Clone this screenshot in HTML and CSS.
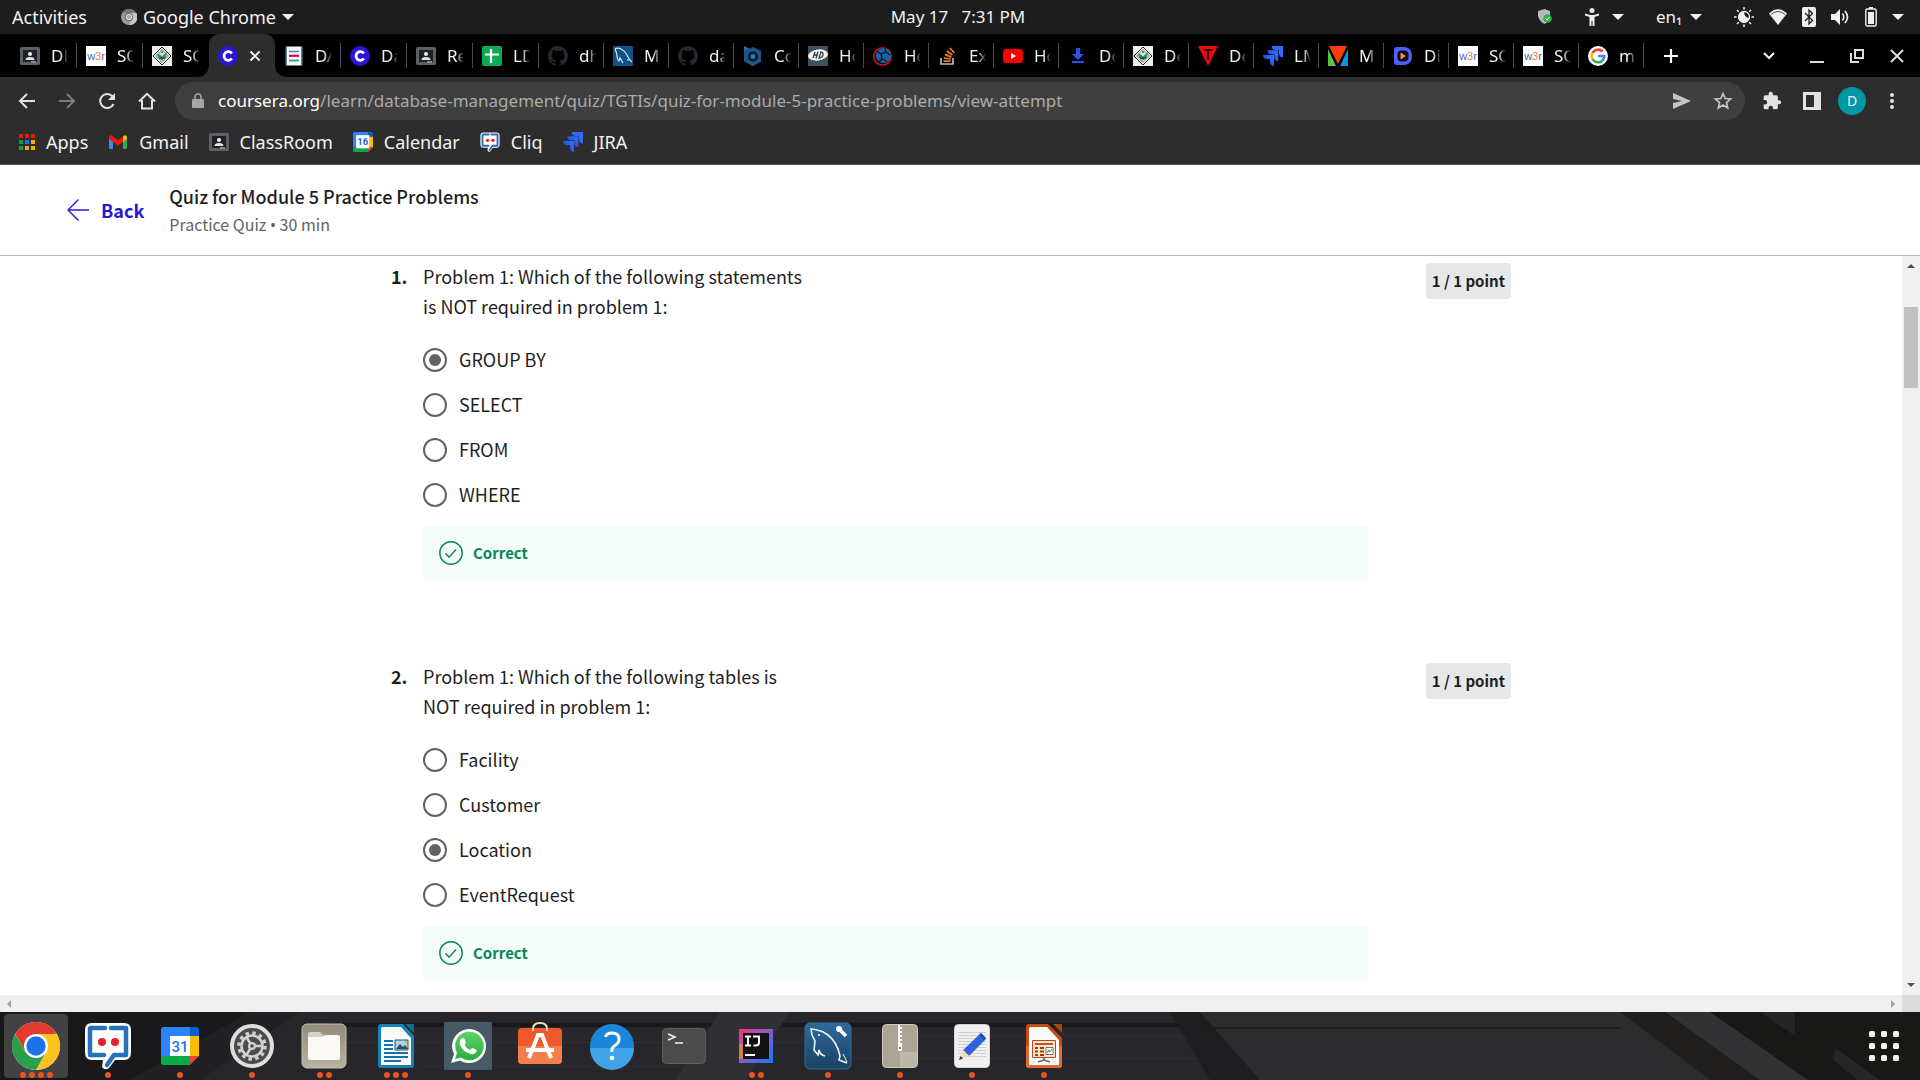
FILE: index.html
```html
<!DOCTYPE html>
<html lang="en">
<head>
<meta charset="utf-8">
<title>Quiz for Module 5 Practice Problems</title>
<link rel="stylesheet" href="styles.css">
</head>
<body>

<svg class="sprite" aria-hidden="true">
  <defs>
    <linearGradient id="g-jira" x1="1" y1="0" x2="0" y2="1"><stop offset=".2" stop-color="#2f6bff"/><stop offset="1" stop-color="#1638c8"/></linearGradient>
    <linearGradient id="g-folder" x1="0" y1="0" x2="0" y2="1"><stop offset="0" stop-color="#938b7a"/><stop offset="1" stop-color="#b9b3a2"/></linearGradient>
    <linearGradient id="g-mysql" x1="0" y1="0" x2="0" y2="1"><stop offset="0" stop-color="#2d6a9c"/><stop offset="1" stop-color="#1b4263"/></linearGradient>
    <linearGradient id="g-wa" x1="0" y1="0" x2="0" y2="1"><stop offset="0" stop-color="#5fd168"/><stop offset="1" stop-color="#27b13e"/></linearGradient>
    <linearGradient id="g-ij" x1="0" y1="0" x2="1" y2="1"><stop offset="0" stop-color="#ff3175"/><stop offset=".5" stop-color="#8a5bd0"/><stop offset="1" stop-color="#087cfa"/></linearGradient>
  </defs>
  <symbol id="classroom" viewBox="0 0 20 20"><rect y="1" width="20" height="18" rx="1.5" fill="#5d6066"/><rect x="3" y="4" width="14" height="12" fill="#1f2124"/><circle cx="10" cy="8" r="2" fill="#f1f1f1"/><path d="M5.5 14q0-3 4.500-3t4.500 3z" fill="#e5e5e5"/><rect x="11" y="15" width="5" height="2" fill="#8a8d92"/></symbol>
  <symbol id="diamond" viewBox="0 0 20 20"><rect width="20" height="20" fill="#eceeec"/><path d="M10 1l9 9-9 9-9-9z" fill="#fff" stroke="#222" stroke-width="1"/><path d="M10 3.500l6.500 6.500-6.500 6.500-6.500-6.500z" fill="#d8dcd8" stroke="#444" stroke-width=".7"/><path d="M5 8l3 .5 2 2 5-5-1 6-4 3-4-3z" fill="#2f8f62"/><path d="M7 12h6M9 6h2" stroke="#222"/></symbol>
  <symbol id="coursera" viewBox="0 0 20 20"><circle cx="10" cy="10" r="10" fill="#2a17d6"/><path d="M13.800 12.500A4.300 4.300 0 1 1 13.800 7.500" fill="none" stroke="#fff" stroke-width="2.800"/></symbol>
  <symbol id="docs" viewBox="0 0 20 20"><rect x="2" y="0" width="16" height="20" rx="1.500" fill="#f8f8f8" stroke="#3c5a66" stroke-width="1.500"/><path d="M5 5.500h10" stroke="#4a7fd6" stroke-width="1.500"/><path d="M5 9.800h10" stroke="#e8004d" stroke-width="2.200"/><path d="M5 14.500h10" stroke="#1fa37a" stroke-width="1.800"/></symbol>
  <symbol id="sheets" viewBox="0 0 20 20"><rect width="20" height="20" rx="2" fill="#0cab54"/><path d="M9 3v14M3 8.500h14" stroke="#fff" stroke-width="2.200"/></symbol>
  <symbol id="github" viewBox="0 0 16 16"><path fill="#24292f" d="M8 0C3.580 0 0 3.580 0 8c0 3.540 2.290 6.530 5.470 7.590.4.070.55-.17.55-.38 0-.19-.01-.82-.01-1.490-2.010.37-2.530-.49-2.690-.94-.09-.23-.48-.94-.82-1.130-.28-.15-.68-.52-.01-.53.63-.01 1.080.58 1.230.82.72 1.210 1.870.87 2.330.66.07-.52.28-.87.51-1.070-1.780-.2-3.640-.89-3.640-3.950 0-.87.31-1.590.82-2.150-.08-.2-.36-1.020.08-2.120 0 0 .67-.21 2.200.82.64-.18 1.320-.27 2-.27s1.360.09 2 .27c1.530-1.040 2.200-.82 2.200-.82.44 1.100.16 1.920.08 2.120.51.56.82 1.270.82 2.150 0 3.070-1.870 3.750-3.650 3.950.29.25.54.73.54 1.480 0 1.070-.01 1.930-.01 2.200 0 .21.15.46.55.38A8.010 8.010 0 0 0 16 8c0-4.420-3.580-8-8-8z"/></symbol>
  <symbol id="mysql" viewBox="0 0 20 20"><rect width="20" height="20" fill="#0e5386"/><path d="M2 3c3-2 9 0 12 6l2 4 3 3M2 3c1 3 2 4 2 7s1 4 2 5l1-3 3 5M14 14l2 0" fill="none" stroke="#d4e4ee" stroke-width="1.200"/></symbol>
  <symbol id="hexb" viewBox="0 0 20 20"><path d="M1 0l5 2.500v5l4-2 8 4.500v5.500l-8 4.500-9-5z" fill="#2f6c9f"/><path d="M10 1l8 4v10.500L10 20l-9-5V4.500l5-2z" fill="#1f5688"/><circle cx="10" cy="10.500" r="4" fill="none" stroke="#081018" stroke-width="2.200"/><circle cx="10" cy="10.500" r="1.600" fill="#3f86c0"/></symbol>
  <symbol id="hd" viewBox="0 0 20 20"><rect width="20" height="20" fill="#3d505c"/><ellipse cx="10" cy="9" rx="10" ry="5.500" fill="#f2f2f2" transform="rotate(-8 10 9)"/><path d="M7 6l-2 6M10 5.500l-2 7M6 9h4M13 6l-2 6q4 0 4-4 0-2-3-2" stroke="#333f48" stroke-width="1.300" fill="none"/></symbol>
  <symbol id="globe" viewBox="0 0 20 20"><circle cx="9.500" cy="10.500" r="8.700" fill="#101418" stroke="#d0101c" stroke-width="1.500"/><circle cx="10.500" cy="9.500" r="7.500" fill="#1763a8"/><path d="M4 5l4 3 1 5-3 3M8 8l5-2 4 3M13 6l-1-4M9 13l5 2" stroke="#08121c" stroke-width="1.200" fill="none"/></symbol>
  <symbol id="stack" viewBox="0 0 20 20"><path d="M3 12v6h12v-6" fill="none" stroke="#bcbbbb" stroke-width="1.700"/><path d="M5.500 15.200h7M5.800 12l7 1M7 8.400l6.400 2.700M9 5l5.400 4M12 2l4.300 5" stroke="#f48024" stroke-width="1.700"/></symbol>
  <symbol id="youtube" viewBox="0 0 20 20"><rect y="3" width="20" height="14" rx="3.500" fill="#f00"/><path d="M8 7v6l5-3z" fill="#fff"/></symbol>
  <symbol id="download" viewBox="0 0 20 20"><path d="M8 2h4v6h4l-6 6-6-6h4zM4 15h12v2H4z" fill="#2b52e6"/></symbol>
  <symbol id="tri" viewBox="0 0 20 20"><path d="M0 0h20L10 20z" fill="#f00808"/><path d="M5.500 4h9M10 4v10" stroke="#300" stroke-width="2.200"/></symbol>
  <symbol id="jira" viewBox="0 0 20 20"><path d="M8.500 0H20v11.500C17.300 11.500 16 9.500 16 7.500V4h-3.500C10.500 4 8.500 2.500 8.500 0z" fill="#3069ff"/><path d="M4.300 4.300h11v11c-2.700 0-4-2-4-4V8.300H8.300c-2.200 0-4-1.500-4-4z" fill="url(#g-jira)"/><path d="M0 9h11v11c-2.700 0-4-2-4-4v-3H4c-2.200 0-4-1.500-4-4z" fill="url(#g-jira)"/></symbol>
  <symbol id="vee" viewBox="0 0 20 20"><path d="M1 0h18l-9 18z" fill="#ff3d0a"/><path d="M0 3v17h8z" fill="#57c444"/><path d="M20 3v17h-8z" fill="#0c93dc"/></symbol>
  <symbol id="play" viewBox="0 0 20 20"><path d="M4 1h8q7 1 7 9t-7 9H4q-3 0-3-3V4q0-3 3-3z" fill="#4b62f5"/><rect x="4.500" y="4.500" width="11" height="11" rx="4" fill="#0a0d24"/><path d="M7.500 6.500v7l5.500-3.500z" fill="#ff8a1c"/></symbol>
  <symbol id="google" viewBox="0 0 20 20"><circle cx="10" cy="10" r="10" fill="#fff"/><g fill="none" stroke-width="2.600"><path d="M14.600 5.500A6.300 6.300 0 0 0 4.500 7" stroke="#ea4335"/><path d="M4.500 7a6.300 6.300 0 0 0 0 6" stroke="#fbbc05"/><path d="M4.500 13a6.300 6.300 0 0 0 9.700 1.700" stroke="#34a853"/><path d="M14.200 14.700A6.300 6.300 0 0 0 16.200 10H10" stroke="#4285f4"/></g></symbol>
  <symbol id="gmail" viewBox="0 0 20 16"><path d="M1 3v11q0 1 1 1h3V7z" fill="#4285f4"/><path d="M19 3v11q0 1-1 1h-3V7z" fill="#34a853"/><path d="M15 2.500V8l4-3V3q-1-3-4-.5z" fill="#fbbc04"/><path d="M1 3v2l4 3 5 3.500L15 8V2.500l-5 3.700-5-3.700Q2 0 1 3z" fill="#f2180c"/></symbol>
  <symbol id="cal" viewBox="0 0 38 38"><path d="M0 3q0-3 3-3h26v9H9v20H0z" fill="#2a84fb"/><path d="M29 0h6q3 0 3 3v6h-9z" fill="#0a5fd0"/><path d="M29 9h9v20h-9z" fill="#fbbc04"/><path d="M0 29h29v9H3q-3 0-3-3z" fill="#0ba84a"/><path d="M29 29h9l-9 9z" fill="#ea4335"/><path d="M9 9h20v20H9z" fill="#fff"/></symbol>
  <symbol id="cliq" viewBox="0 0 48 48"><path d="M8 1h32q7 0 7 7v22q0 8-7 8h-9l-6 8q-4 3-7-1l1-7H8q-7 0-7-8V8q0-7 7-7z" fill="#fff"/><path d="M21 6H7q-1 0-1 1v26h14M27 6h15v27H30l-7 10" fill="none" stroke="#2870b8" stroke-width="4.500" stroke-linejoin="round" stroke-linecap="round"/><circle cx="18" cy="20" r="4" fill="#e8202a"/><circle cx="31" cy="20" r="4" fill="#e8202a"/></symbol>
  <symbol id="caret" viewBox="0 0 12 8"><path d="M0 1h12L6 7z" fill="#f0f0f0"/></symbol>
  <symbol id="check" viewBox="0 0 24 24"><g fill="none" stroke="#078756" stroke-width="1.400"><circle cx="12" cy="12" r="11.200"/><path d="M6.500 12.300l3.500 3.900 7-7.700"/></g></symbol>
</svg>

<header class="desktop-bar">
  <div class="desktop-left">
    <button>Activities</button>
    <button class="app-menu">
      <svg width="16" height="16" viewBox="0 0 16 16"><circle cx="8" cy="8" r="8" fill="#9a9a9a"/><path d="M8 4h7.500A8 8 0 0 1 8 16l3.500-6z" fill="#c9c9c9"/><path d="M1 4a8 8 0 0 1 14 0H8z" fill="#777"/><circle cx="8" cy="8" r="4" fill="#555"/><circle cx="8" cy="8" r="2.800" fill="#aaa" stroke="#eee"/></svg>
      Google Chrome
      <svg class="caret" width="12" height="8"><use href="#caret"/></svg>
    </button>
  </div>
  <time class="clock">May 17 &nbsp; 7:31 PM</time>
  <div class="desktop-right">
    <svg width="14" height="16" viewBox="0 0 14 16"><path d="M6.500 0L12 2v6q0 4-5.500 7Q1 12 0 7V2z" fill="#b9b9b9"/><circle cx="9.500" cy="9.500" r="4.300" fill="#2fb344"/><path d="M7.500 9.500l1.500 1.500 2.500-3" stroke="#fff" fill="none"/></svg>
    <button class="menu"><svg width="16" height="18" viewBox="0 0 16 18"><circle cx="8" cy="2.500" r="2.500" fill="#f0f0f0"/><path d="M1 5.500l5 1.500h4l5-1.500v2L10.500 9v9h-2v-5h-1v5h-2V9L1 7.500z" fill="#f0f0f0"/></svg><svg class="caret" width="12" height="8"><use href="#caret"/></svg></button>
    <button class="menu lang">en₁<svg class="caret" width="12" height="8"><use href="#caret"/></svg></button>
    <button class="menu tray">
      <svg width="20" height="20" viewBox="0 0 20 20"><circle cx="10" cy="10" r="5.500" fill="none" stroke="#f0f0f0" stroke-width="1.300"/><path d="M10 4.500a5.500 5.500 0 1 0 5.500 6.500Q10 11 10 4.500z" fill="#f0f0f0"/><path d="M10 0v2.500M10 17.500V20M0 10h2.500M17.500 10H20M3 3l1.800 1.800M15.200 15.200L17 17M17 3l-1.800 1.800M4.800 15.200L3 17" stroke="#f0f0f0" stroke-width="1.500"/></svg>
      <svg width="18" height="16" viewBox="0 0 18 16"><path d="M0 4.500Q9-4 18 4.500L9 16z" fill="#f0f0f0"/><path d="M2 5.500Q9-.5 16 5.500" stroke="#1d1d1d" fill="none" stroke-width=".8"/></svg>
      <svg width="14" height="20" viewBox="0 0 14 20"><rect width="14" height="20" rx="2" fill="#f0f0f0"/><path d="M3 6l7.500 7.500L7 17V3l3.500 3.500L3 14" fill="none" stroke="#1d1d1d" stroke-width="1.300"/></svg>
      <svg width="19" height="16" viewBox="0 0 19 16"><path d="M0 5h4l5-5v16l-5-5H0z" fill="#f0f0f0"/><path d="M11.500 4.500q2.500 3.500 0 7M14 2q5 6 0 12" fill="none" stroke="#f0f0f0" stroke-width="1.600"/></svg>
      <svg width="12" height="20" viewBox="0 0 12 20"><path d="M4 0h4v2H4z" fill="#f0f0f0"/><rect x=".8" y="2" width="10.400" height="17" rx="1.500" fill="none" stroke="#f0f0f0" stroke-width="1.400"/><path d="M3 5h6v12H3z" fill="#f0f0f0"/></svg>
      <svg width="12" height="8"><use href="#caret"/></svg>
    </button>
  </div>
</header>

<nav class="tab-strip">
  <div class="tabs">
    <button class="tab wide"><svg><use href="#classroom"/></svg><span>DB</span></button>
    <button class="tab wide"><svg class="w3r" viewBox="0 0 20 20"><text x="10" y="14" text-anchor="middle">w<tspan>3</tspan>r</text></svg><span>SQ</span></button>
    <button class="tab wide plain"><svg><use href="#diamond"/></svg><span>SQ</span></button>
    <button class="tab wide active"><svg><use href="#coursera"/></svg><svg class="close" viewBox="0 0 12 12"><path d="M1.500 1.500l9 9M10.500 1.500l-9 9" stroke="#fff" stroke-width="1.900"/></svg></button>
    <button class="tab wide"><svg><use href="#docs"/></svg><span>DA</span></button>
    <button class="tab wide"><svg><use href="#coursera"/></svg><span>Da</span></button>
    <button class="tab wide"><svg><use href="#classroom"/></svg><span>Re</span></button>
    <button class="tab wide"><svg><use href="#sheets"/></svg><span>LD</span></button>
    <button class="tab"><svg><use href="#github"/></svg><span>dh</span></button>
    <button class="tab"><svg><use href="#mysql"/></svg><span>M</span></button>
    <button class="tab"><svg><use href="#github"/></svg><span>da</span></button>
    <button class="tab"><svg><use href="#hexb"/></svg><span>Co</span></button>
    <button class="tab"><svg><use href="#hd"/></svg><span>Ho</span></button>
    <button class="tab"><svg><use href="#globe"/></svg><span>Ho</span></button>
    <button class="tab"><svg><use href="#stack"/></svg><span>Ex</span></button>
    <button class="tab"><svg><use href="#youtube"/></svg><span>Ho</span></button>
    <button class="tab"><svg><use href="#download"/></svg><span>Do</span></button>
    <button class="tab"><svg><use href="#diamond"/></svg><span>De</span></button>
    <button class="tab"><svg><use href="#tri"/></svg><span>De</span></button>
    <button class="tab"><svg><use href="#jira"/></svg><span>LM</span></button>
    <button class="tab"><svg><use href="#vee"/></svg><span>M</span></button>
    <button class="tab"><svg><use href="#play"/></svg><span>Di</span></button>
    <button class="tab"><svg class="w3r" viewBox="0 0 20 20"><text x="10" y="14" text-anchor="middle">w<tspan>3</tspan>r</text></svg><span>SQ</span></button>
    <button class="tab"><svg class="w3r" viewBox="0 0 20 20"><text x="10" y="14" text-anchor="middle">w<tspan>3</tspan>r</text></svg><span>SQ</span></button>
    <button class="tab"><svg><use href="#google"/></svg><span>m</span></button>
    <button class="new-tab" aria-label="New tab"><svg width="16" height="16" viewBox="0 0 16 16"><path d="M8 1v14M1 8h14" stroke="#fff" stroke-width="2.200"/></svg></button>
  </div>
  <div class="window-controls">
    <button class="search-tabs" aria-label="Search tabs"><svg width="12" height="8" viewBox="0 0 12 8"><path d="M1 1l5 5 5-5" fill="none" stroke="#fff" stroke-width="2"/></svg></button>
    <button aria-label="Minimize"><svg width="14" height="14" viewBox="0 0 14 14"><path d="M0 13h14" stroke="#ddd" stroke-width="2"/></svg></button>
    <button aria-label="Restore"><svg width="14" height="14" viewBox="0 0 14 14"><path d="M5 1h8v8H5zM1 4v9h8" fill="none" stroke="#ddd" stroke-width="2"/></svg></button>
    <button aria-label="Close"><svg width="14" height="14" viewBox="0 0 14 14"><path d="M1 1l12 12M13 1L1 13" stroke="#ddd" stroke-width="2"/></svg></button>
  </div>
</nav>

<div class="toolbar">
  <div class="nav-buttons">
    <button aria-label="Back"><svg width="18" height="18" viewBox="0 0 18 18"><path d="M17 9H2M9 2L2 9l7 7" fill="none" stroke="#e3e3e3" stroke-width="2"/></svg></button>
    <button aria-label="Forward"><svg width="18" height="18" viewBox="0 0 18 18"><path d="M1 9h15M9 2l7 7-7 7" fill="none" stroke="#7c7c7c" stroke-width="2"/></svg></button>
    <button aria-label="Reload"><svg width="18" height="18" viewBox="0 0 18 18"><path d="M15.500 12A7 7 0 1 1 14.500 4.500" fill="none" stroke="#e3e3e3" stroke-width="2"/><path d="M17 1v7h-7z" fill="#e3e3e3"/></svg></button>
    <button aria-label="Home"><svg width="18" height="18" viewBox="0 0 18 18"><path d="M1 9.500L9 1.800l8 7.700M4 8v8.500h10V8" fill="none" stroke="#e3e3e3" stroke-width="2"/></svg></button>
  </div>
  <div class="omnibox">
    <svg width="12" height="16" viewBox="0 0 12 16"><rect y="6" width="12" height="9" rx="1" fill="#a4a6aa"/><path d="M3 7V4a3 3 0 0 1 6 0v3" fill="none" stroke="#a4a6aa" stroke-width="1.600"/></svg>
    <div class="address"><label for="url">coursera.org</label><input id="url" type="text" value="/learn/database-management/quiz/TGTIs/quiz-for-module-5-practice-problems/view-attempt"></div>
    <button aria-label="Share"><svg width="18" height="16" viewBox="0 0 18 16"><path d="M0 0l18 8-18 8V10l9-2-9-2z" fill="#c4c4c4"/></svg></button>
    <button aria-label="Bookmark"><svg width="20" height="20" viewBox="0 0 20 20"><path d="M10 2.500l2.200 5 5.400.5-4.100 3.600 1.200 5.300L10 14.100l-4.700 2.800 1.200-5.300L2.400 8l5.400-.5z" fill="none" stroke="#c4c4c4" stroke-width="1.700"/></svg></button>
  </div>
  <div class="nav-buttons">
    <button aria-label="Extensions"><svg width="20" height="20" viewBox="0 0 24 24"><path fill="#e3e3e3" d="M20.500 11H19V7a2 2 0 0 0-2-2h-4V3.500a2.500 2.500 0 0 0-5 0V5H4a2 2 0 0 0-2 2v3.800h1.500a2.700 2.700 0 0 1 0 5.400H2V20a2 2 0 0 0 2 2h3.800v-1.500a2.700 2.700 0 0 1 5.400 0V22H17a2 2 0 0 0 2-2v-4h1.500a2.500 2.500 0 0 0 0-5z"/></svg></button>
    <button aria-label="Side panel"><svg width="18" height="18" viewBox="0 0 18 18"><path fill="#e3e3e3" fill-rule="evenodd" d="M0 0h18v18H0zM3 3h8v12H3z"/></svg></button>
    <button class="avatar" aria-label="Profile">D</button>
    <button aria-label="Menu"><svg width="4" height="16" viewBox="0 0 4 16"><g fill="#e3e3e3"><circle cx="2" cy="2" r="2"/><circle cx="2" cy="8" r="2"/><circle cx="2" cy="14" r="2"/></g></svg></button>
  </div>
</div>

<nav class="bookmarks">
  <a href="#"><svg width="16" height="16" viewBox="0 0 16 16"><path d="M0 0h4v4H0zM6 0h4v4H6zM12 0h4v4h-4z" fill="#f0140c"/><path d="M0 6h4v4H0zM0 12h4v4H0z" fill="#0f9d48"/><path d="M6 6h4v4H6z" fill="#1a73e8"/><path d="M12 6h4v4h-4zM6 12h4v4H6zM12 12h4v4h-4z" fill="#f9ab00"/></svg>Apps</a>
  <a href="#"><svg width="20" height="16"><use href="#gmail"/></svg>Gmail</a>
  <a href="#"><svg width="20" height="20"><use href="#classroom"/></svg>ClassRoom</a>
  <a href="#"><svg width="20" height="20" viewBox="0 0 38 38"><use href="#cal"/><path d="M6 6h25v25H6z" fill="#fff"/><text x="18.500" y="25" text-anchor="middle" font-family="Roboto, sans-serif" font-weight="700" font-size="18" fill="#1a60d8">16</text></svg>Calendar</a>
  <a href="#"><svg width="20" height="20"><use href="#cliq"/></svg>Cliq</a>
  <a href="#"><svg width="20" height="20"><use href="#jira"/></svg>JIRA</a>
</nav>

<header class="quiz-header">
  <a class="back" href="#"><svg width="22" height="22" viewBox="0 0 22 22"><path d="M22 11H1M11.500.5L1 11l10.500 10.500" fill="none" stroke="#2a17d6" stroke-width="1.400"/></svg>Back</a>
  <div>
    <h1>Quiz for Module 5 Practice Problems</h1>
    <p>Practice Quiz <span class="bullet">•</span> 30 min</p>
  </div>
</header>

<div class="viewport">
  <main class="quiz">
    <section class="question">
      <span class="number">1.</span>
      <fieldset>
        <legend>Problem 1: Which of the following statements is NOT required in problem 1:</legend>
        <label><input type="radio" name="q1" checked>GROUP BY</label>
        <label><input type="radio" name="q1">SELECT</label>
        <label><input type="radio" name="q1">FROM</label>
        <label><input type="radio" name="q1">WHERE</label>
        <p class="feedback"><svg width="24" height="24"><use href="#check"/></svg>Correct</p>
      </fieldset>
      <span class="points">1 / 1 point</span>
    </section>
    <section class="question">
      <span class="number">2.</span>
      <fieldset>
        <legend>Problem 1: Which of the following tables is NOT required in problem 1:</legend>
        <label><input type="radio" name="q2">Facility</label>
        <label><input type="radio" name="q2">Customer</label>
        <label><input type="radio" name="q2" checked>Location</label>
        <label><input type="radio" name="q2">EventRequest</label>
        <p class="feedback"><svg width="24" height="24"><use href="#check"/></svg>Correct</p>
      </fieldset>
      <span class="points">1 / 1 point</span>
    </section>
  </main>
  <div class="scroll-y">
    <svg width="8" height="4" viewBox="0 0 8 4"><path d="M0 4h8L4 0z" fill="#505050"/></svg>
    <div class="thumb"></div>
    <svg width="8" height="4" viewBox="0 0 8 4"><path d="M0 0h8L4 4z" fill="#505050"/></svg>
  </div>
  <div class="scroll-x">
    <svg width="4" height="8" viewBox="0 0 4 8"><path d="M4 0v8L0 4z" fill="#a3a3a3"/></svg>
    <svg width="4" height="8" viewBox="0 0 4 8"><path d="M0 0v8l4-4z" fill="#a3a3a3"/></svg>
  </div>
  <div class="corner"></div>
</div>

<footer class="dock">
  <svg class="wood" viewBox="0 0 1920 68" preserveAspectRatio="none" aria-hidden="true">
    <rect width="1920" height="68" fill="#19191b"/>
    <path d="M130 68L250 0h190L280 68z" fill="#212125"/><path d="M300 0h1080v68H200z" fill="#27262a"/>
    <path d="M330 11h1040v4H330z" fill="#19181a"/>
    <path d="M340 30h500v1H340zM820 46h430v1H820zM420 54h300v1H420zM900 24h400v1H900z" fill="#2e2d31"/>
    <path d="M720 0h70l-45 68h-70z" fill="#302f34"/>
    <path d="M1170 0h30l60 68h-50z" fill="#1e1d1f"/><path d="M1200 0h420l120 68h-480z" fill="#2b2b2d"/>
    <path d="M1200 15h420v2H1200z" fill="#201b1b"/>
    <path d="M1620 0h40l120 68h-70z" fill="#211f1d"/><path d="M1665 0h45l100 68h-50z" fill="#323234"/>
    <path d="M1710 0h210v68h-112z" fill="#181817"/><path d="M1760 0h35v24z" fill="#252527"/><path d="M1835 36l45 32h-22l-25-20z" fill="#262627"/>
  </svg>
  <div class="apps">
    <button class="app current" aria-label="Chrome"><svg viewBox="0 0 48 48"><circle cx="24" cy="24" r="24" fill="#fff"/><path d="M3.200 12A24 24 0 0 1 44.800 12H24L13.600 30z" fill="#e33b2e"/><path d="M3.200 12A24 24 0 0 0 24 48l10.400-18H24L13.600 30z" fill="#2c9f4b"/><path d="M44.800 12A24 24 0 0 1 24 48l10.400-18L34 12z" fill="#fcc31e"/><path d="M24 12h20.800l-12 6z" fill="#fcc31e"/><circle cx="24" cy="24" r="12" fill="#fff"/><circle cx="24" cy="24" r="9.700" fill="#1a73e8"/></svg><span class="dots"><i></i><i></i><i></i><i></i></span></button>
    <button class="app" aria-label="Cliq"><svg><use href="#cliq"/></svg><span class="dots"><i></i></span></button>
    <button class="app" aria-label="Calendar"><svg viewBox="-5 -5 48 48"><use href="#cal" width="38" height="38"/><text x="19" y="25" text-anchor="middle" font-family="Roboto, sans-serif" font-weight="500" font-size="15" fill="#1a73e8">31</text></svg><span class="dots"><i></i></span></button>
    <button class="app" aria-label="Settings"><svg viewBox="0 0 48 48"><circle cx="24" cy="24" r="20" fill="#4b4b4b" stroke="#dedede" stroke-width="4"/><circle cx="24" cy="24" r="13" fill="none" stroke="#d2d2d2" stroke-width="3.500" stroke-dasharray="3.400 3.400"/><circle cx="24" cy="24" r="10.500" fill="none" stroke="#d2d2d2" stroke-width="2.500"/><path d="M24 24h9M24 24l-5-8M24 24l-5 8" stroke="#d2d2d2" stroke-width="2.500"/><circle cx="24" cy="24" r="4" fill="#d2d2d2"/><circle cx="24" cy="24" r="1.800" fill="#4b4b4b"/></svg><span class="dots"><i></i></span></button>
    <button class="app" aria-label="Files"><svg viewBox="0 0 48 48"><rect x="2" y="2" width="44" height="44" rx="5" fill="url(#g-folder)" stroke="#c5bfae"/><path d="M8 12q0-2 2-2h10l4 4v6H8z" fill="#d5d0c6"/><path d="M8 15h14l3-2h13q2 0 2 2v21q0 2-2 2H10q-2 0-2-2z" fill="#faf9f7"/></svg><span class="dots"><i></i><i></i></span></button>
    <button class="app" aria-label="Writer"><svg viewBox="0 0 48 48"><path d="M11 2h20l11 12v29q0 3-3 3H9q-3 0-3-3V5q0-3 3-3z" fill="#1782b8"/><path d="M33 2h9v9z" fill="#0f6d9c"/><path d="M10 5h19l10 11v27H9V6z" fill="#fafafa"/><path d="M12 19h9M12 23h9M12 27h9M12 31h24M12 35h24M12 39h17" stroke="#1173a8" stroke-width="2"/><path d="M23 18h13v10H23z" fill="#a9d5f0" stroke="#15567a"/><path d="M24 27l4-5 3 3 2-2 3 4z" fill="#444"/><path d="M32 19h3v3z" fill="#f5b400"/></svg><span class="dots"><i></i><i></i><i></i></span></button>
    <button class="app" aria-label="WhatsApp"><svg viewBox="0 0 48 48"><rect width="48" height="48" fill="#455a64"/><path d="M7 41l3-9A17 17 0 1 1 16 38.500z" fill="#fff"/><path d="M11 37l2-6A14.300 14.300 0 1 1 17 35.500z" fill="url(#g-wa)"/><path d="M17 17q2-2 3.500 0l1.500 3.500-1.500 2.500q2 3.500 5.500 5l2-2q1-.5 4 1.500 1.500 1 0 3-3 3-8 .5-5-2-8-8-1-4 1-6z" fill="#fff"/></svg><span class="dots"><i></i></span></button>
    <button class="app" aria-label="Software"><svg viewBox="0 0 48 48"><rect x="2" y="6" width="44" height="36" rx="4" fill="#f0592a"/><path d="M2 24h44v14q0 4-4 4H6q-4 0-4-4z" fill="#f47f4d"/><path d="M17 9V7q0-6 7-6t7 6v2" fill="none" stroke="#f5deb4" stroke-width="2"/><path d="M13 36l9-23h4l9 23M10 28h28" fill="none" stroke="#fff" stroke-width="4"/></svg></button>
    <button class="app" aria-label="Help"><svg viewBox="0 0 48 48"><circle cx="24" cy="24" r="22" fill="#1e86d8"/><path d="M2 26h44a22 22 0 0 1-44 0z" fill="#42a3e6"/><path d="M17.500 15q1-4 6.500-4 7 0 7 6 0 4-4 6.500t-3 6.500" fill="none" stroke="#fff" stroke-width="3"/><circle cx="24" cy="36" r="2.300" fill="#fff"/></svg></button>
    <button class="app" aria-label="Terminal"><svg viewBox="0 0 48 48"><rect x="2.500" y="6.500" width="43" height="35" rx="4" fill="#4b4b4b" stroke="#5d5d5d"/><path d="M8 12l7 3-7 3M15 21h8" fill="none" stroke="#f2f2f2" stroke-width="1.500"/></svg></button>
    <button class="app" aria-label="IntelliJ"><svg viewBox="0 0 48 48"><rect x="7" y="7" width="34" height="34" fill="url(#g-ij)"/><path d="M7 22h8v15H7z" fill="#c9824a"/><rect x="11" y="11" width="26" height="26" fill="#111"/><path d="M13 14.500h6M13 23.500h6M16 14v10M21 14.500h6v6q0 3-3 3h-2.500" stroke="#fff" stroke-width="2" fill="none"/><path d="M13 33h10" stroke="#fff" stroke-width="2"/></svg><span class="dots"><i></i><i></i></span></button>
    <button class="app" aria-label="MySQL Workbench"><svg viewBox="0 0 48 48"><rect x="1" y="1" width="46" height="46" rx="5" fill="url(#g-mysql)" stroke="#2f6f9f"/><path d="M43 41l-8-3 1-4q-3-14-12-21-5-4-11-5-5-1-6-1l1 6 3 6-1 9 4 5 1-5q1 5 6 6" fill="none" stroke="#e8f2f8" stroke-width="1.600"/><path d="M43 40l-4-8" stroke="#e8f2f8"/><path d="M34 6l8 8" stroke="#fff" stroke-width="3.500"/><circle cx="35" cy="7" r="3" fill="#fff"/><circle cx="15" cy="13" r="1" fill="#fff"/></svg><span class="dots"><i></i></span></button>
    <button class="app" aria-label="Archive"><svg viewBox="0 0 48 48"><rect x="6.500" y="2.500" width="35" height="43" rx="4" fill="#aaa595" stroke="#cfcabb"/><path d="M24 30h17v11q0 4-4 4H24z" fill="#bcb8a9"/><path d="M22 3h2v2h2v2h-2v2h2v2h-2v2h2v2h-2v2h2v2h-2v2h-2z" fill="#f5f5f5"/><rect x="22" y="21" width="4" height="8" fill="#fff"/><rect x="23" y="25" width="2" height="2" fill="#777"/></svg><span class="dots"><i></i></span></button>
    <button class="app" aria-label="Text editor"><svg viewBox="0 0 48 48"><rect x="6.500" y="2.500" width="35" height="43" rx="4" fill="#f1f1f1" stroke="#d4d4d4"/><path d="M10 10.500h28M10 13.500h28M10 16.500h28M10 19.500h28M10 22.500h28M10 25.500h28M10 28.500h28M10 31.500h28M10 34.500h28" stroke="#cfcfcf"/><path d="M33 11l5 6-17 17-6-6z" fill="#2f62dc"/><path d="M31 13l2-2 5 5-2 2z" fill="#1d49b4"/><path d="M15 28l6 6-10 4z" fill="#f7d9b8"/><path d="M12.500 34l2.500 2.500-4 1.500z" fill="#333"/></svg><span class="dots"><i></i></span></button>
    <button class="app" aria-label="Impress"><svg viewBox="0 0 48 48"><path d="M9 2h19l14 14v27q0 3-3 3H9q-3 0-3-3V5q0-3 3-3z" fill="#c44d15"/><path d="M6 24h36v19q0 3-3 3H9q-3 0-3-3z" fill="#e06a33"/><path d="M33 2h9v9z" fill="#b04312"/><path d="M10 5h17l12 13v25H9V6z" fill="#fafafa"/><path d="M12.500 18.500h23v17h-23z" fill="#fde4cf" stroke="#b04a1c"/><path d="M15 22h18" stroke="#c8501a" stroke-width="2"/><path d="M15 26h3M15 29.500h3M15 33h3M20 26h4M20 29.500h4M20 33h4" stroke="#a03c10" stroke-width="2"/><path d="M26 25.500h7v7h-7z" fill="#fff" stroke="#555" stroke-width=".8"/><path d="M27 31l2-3 1 2 2-3" stroke="#2d9a3a" fill="none"/><path d="M24 36v2l-6 2M24 38l6 2" stroke="#666" stroke-width="1.500" fill="none"/></svg><span class="dots"><i></i></span></button>
  </div>
  <button class="launcher" aria-label="Show applications"><svg width="30" height="30" viewBox="0 0 30 30"><g fill="#f0f0ee"><rect width="6" height="6" rx="1.500"/><rect x="12" width="6" height="6" rx="1.500"/><rect x="24" width="6" height="6" rx="1.500"/><rect y="12" width="6" height="6" rx="1.500"/><rect x="12" y="12" width="6" height="6" rx="1.500"/><rect x="24" y="12" width="6" height="6" rx="1.500"/><rect y="24" width="6" height="6" rx="1.500"/><rect x="12" y="24" width="6" height="6" rx="1.500"/><rect x="24" y="24" width="6" height="6" rx="1.500"/></g></svg></button>
</footer>

</body>
</html>
```
FILE: styles.css
```css
* { box-sizing: border-box; }

body {
  margin: 0;
  height: 100vh;
  display: flex;
  flex-direction: column;
  overflow: hidden;
  font: 17px/24px "Noto Sans", "Open Sans", sans-serif;
  color: #f2f2f2;
}

button {
  display: flex;
  align-items: center;
  justify-content: center;
  padding: 0;
  border: 0;
  background: none;
  color: inherit;
  font: inherit;
}

a { color: inherit; text-decoration: none; }
svg { flex: none; display: block; }
h1, p { margin: 0; }
.sprite { position: absolute; width: 0; height: 0; }

/* Desktop status bar */
.desktop-bar {
  flex: none;
  display: grid;
  grid-template-columns: 1fr auto 1fr;
  align-items: center;
  height: 34px;
  padding: 0 16px 0 12px;
  background: #1d1d1d;
}
.desktop-left { display: flex; gap: 34px; font-size: 18px; }
.app-menu { gap: 6px; }
.desktop-right { display: flex; align-items: center; justify-content: flex-end; gap: 32px; }
.menu { gap: 12px; }
.lang { gap: 8px; }
.tray { gap: 15px; }

/* Tabs */
.tab-strip {
  flex: none;
  display: flex;
  height: 43px;
  padding: 0 3px 0 11px;
  background: #000;
}
.tabs { flex: 1; display: flex; min-width: 0; }
.tab {
  position: relative;
  flex: 0 1 65px;
  justify-content: flex-start;
  gap: 11px;
  padding-left: 9px;
  background: linear-gradient(#4a4a4a, #4a4a4a) right center / 1px 25px no-repeat;
}
.tab.wide { flex-basis: 66px; }
.tab svg { width: 20px; height: 20px; }
.tab .w3r { background: #fff; }
.w3r text { font: 11px "Liberation Sans", sans-serif; fill: #4466b0; }
.w3r tspan { fill: #f08040; }
.tab span {
  width: 17px;
  overflow: hidden;
  text-align: left;
  white-space: nowrap;
  -webkit-mask-image: linear-gradient(90deg, #000 55%, transparent);
  mask-image: linear-gradient(90deg, #000 55%, transparent);
}
.tab.plain { background: none; }
.tab.active { background: #2d2d2d; border-radius: 10px 10px 0 0; }
.tab.active::before,
.tab.active::after {
  content: "";
  position: absolute;
  bottom: 0;
  width: 10px;
  height: 10px;
}
.tab.active::before { right: 100%; background: radial-gradient(circle at 0 0, transparent 9px, #2d2d2d 10px); }
.tab.active::after { left: 100%; background: radial-gradient(circle at 100% 0, transparent 9px, #2d2d2d 10px); }
.tab .close { width: 12px; height: 12px; }
.new-tab { width: 54px; }
.window-controls { display: flex; }
.window-controls button { width: 40px; }
.window-controls .search-tabs { width: 56px; }

/* Address bar */
.toolbar {
  flex: none;
  display: flex;
  align-items: center;
  height: 46px;
  padding: 2px 8px 0 7px;
  background: #2d2d2d;
}
.nav-buttons { display: flex; align-items: center; }
.nav-buttons button { width: 40px; height: 40px; }
.nav-buttons .avatar {
  width: 28px;
  height: 28px;
  margin: 0 6px;
  border-radius: 50%;
  background: #0097a7;
  font-size: 14px;
}
.omnibox {
  flex: 1;
  display: flex;
  align-items: center;
  height: 38px;
  margin: 0 7px 0 8px;
  padding: 0 12px 0 17px;
  border-radius: 19px;
  background: #3f3f3f;
}
.address { flex: 1; display: flex; margin-left: 14px; }
.address label { color: #fff; }
.address input {
  flex: 1;
  min-width: 0;
  padding: 0;
  border: 0;
  outline: 0;
  background: none;
  color: #ababab;
  font: inherit;
}
.omnibox button { margin-left: 22px; }

/* Bookmarks */
.bookmarks {
  flex: none;
  display: flex;
  align-items: center;
  gap: 20px;
  height: 42px;
  padding: 0 19px 4px;
  border-bottom: 1px solid #555;
  background: #2d2d2d;
  font-size: 18px;
}
.bookmarks a { display: flex; align-items: center; gap: 11px; }

/* Quiz header */
.quiz-header,
.viewport {
  font: 18px/30px "Noto Sans CJK SC", "Noto Sans", sans-serif;
  color: #1f1f1f;
  background: #fff;
}
.quiz-header {
  flex: none;
  display: flex;
  align-items: center;
  gap: 25px;
  height: 91px;
  padding-left: 67px;
  border-bottom: 1px solid #b8b8b8;
}
.back { display: flex; align-items: center; gap: 12px; color: #2a17d6; font-weight: 700; }
.quiz-header h1 { font-size: 18px; line-height: 28px; font-weight: 500; }
.quiz-header p { font-size: 16px; line-height: 28px; color: #636363; }
.bullet { font-family: "Noto Sans", sans-serif; }

/* Scrolling page area */
.viewport {
  flex: 1;
  min-height: 0;
  display: grid;
  grid-template: minmax(0, 1fr) 17px / minmax(0, 1fr) 18px;
}
.quiz { overflow: hidden; padding-top: 5px; }
.question {
  display: grid;
  grid-template-columns: 32px minmax(0, 945px) minmax(max-content, 1fr);
  align-items: start;
  max-width: 1120px;
  margin: 0 auto 81px;
}
.number { font-weight: 700; }
.question fieldset { min-width: 0; margin: 0; padding: 0; border: 0; }
.question legend { max-width: 384px; margin-bottom: 15px; padding: 0; }
.question label { display: flex; align-items: center; gap: 12px; height: 45px; }
.question input {
  appearance: none;
  display: grid;
  place-content: center;
  width: 24px;
  height: 24px;
  margin: 2px 0 0;
  border: 2px solid #636363;
  border-radius: 50%;
}
.question input:checked::before {
  content: "";
  width: 12px;
  height: 12px;
  border-radius: 50%;
  background: #636363;
}
.feedback {
  display: flex;
  align-items: center;
  gap: 10px;
  height: 55px;
  margin-top: 9px;
  padding-left: 16px;
  background: #f5fcfa;
  color: #078756;
  font-size: 15px;
  font-weight: 700;
}
.points {
  justify-self: end;
  margin-top: 2px;
  padding: 3px 6px;
  border-radius: 4px;
  background: #e5e7e8;
  font-size: 15px;
  font-weight: 700;
}
.scroll-y {
  display: flex;
  flex-direction: column;
  align-items: center;
  padding: 8px 0;
  background: #f0f0f0;
}
.thumb { width: 14px; height: 81px; margin: 39px 0 auto; background: #c1c1c1; }
.scroll-x {
  display: flex;
  align-items: center;
  justify-content: space-between;
  padding: 0 7px;
  background: #f0f0f0;
}
.corner { background: #dcdcdc; }

/* Dock */
.dock {
  position: relative;
  flex: none;
  display: flex;
  align-items: center;
  justify-content: space-between;
  height: 68px;
  padding-right: 21px;
}
.wood { position: absolute; inset: 0; width: 100%; height: 100%; }
.apps { position: relative; display: flex; gap: 8px; padding-left: 4px; }
.app { position: relative; width: 64px; height: 64px; border-radius: 4px; }
.app.current { background: #424243; }
.app svg { width: 48px; height: 48px; }
.dots {
  position: absolute;
  bottom: 0;
  left: 0;
  right: 0;
  display: flex;
  justify-content: center;
  gap: 3px;
}
.dots i { width: 6px; height: 6px; border-radius: 50%; background: #e95420; }
.launcher { position: relative; }
```
